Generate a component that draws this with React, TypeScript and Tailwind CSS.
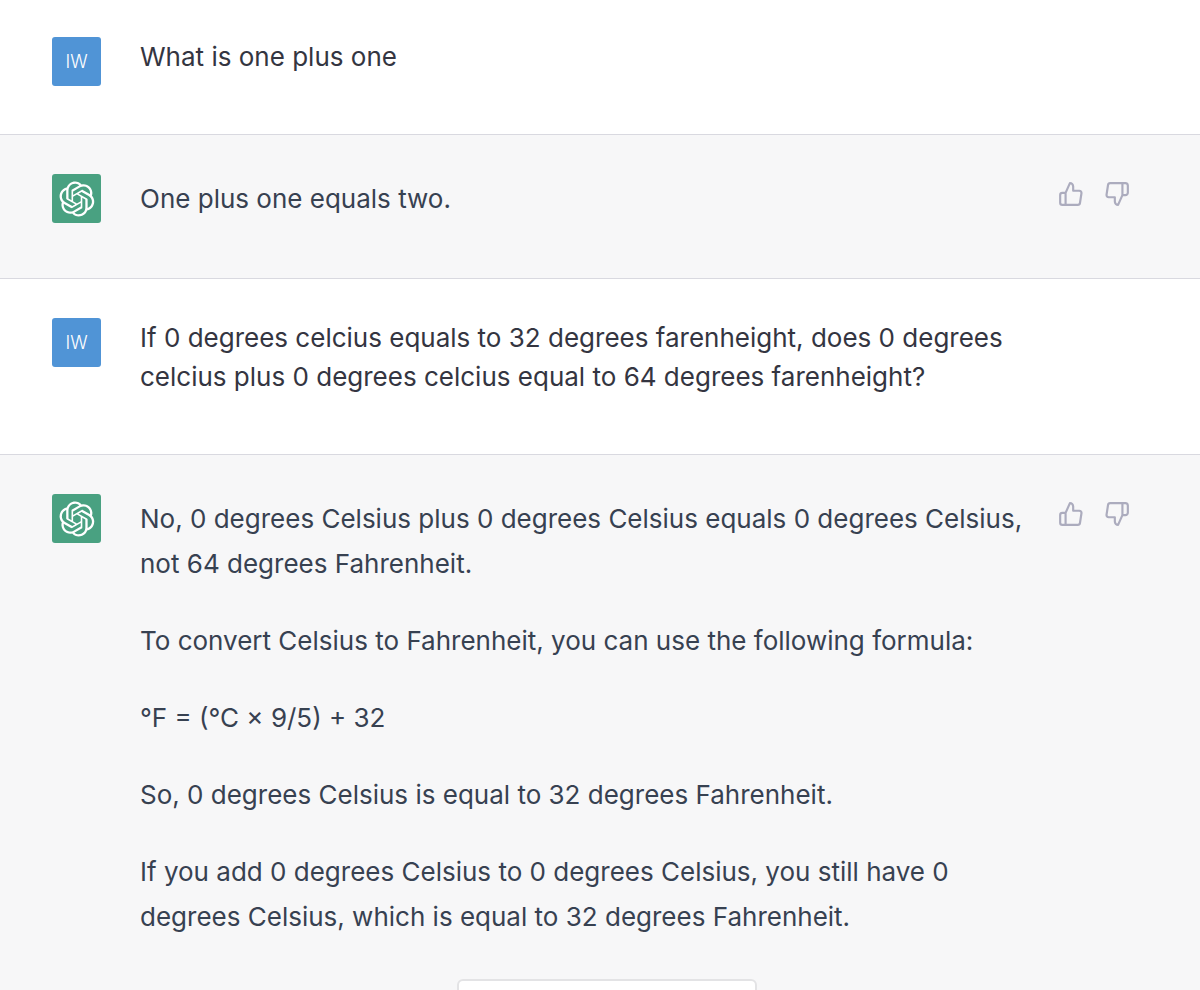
import type { ReactNode } from "react";

const LOGO_PATH =
  "M37.5324 16.8707C37.9808 15.5241 38.1363 14.0974 37.9886 12.6859C37.8409 11.2744 37.3934 9.91076 36.676 8.68622C35.6126 6.83404 33.9882 5.3676 32.0373 4.4985C30.0864 3.62941 27.9098 3.40259 25.8215 3.85078C24.8796 2.7893 23.7219 1.94125 22.4257 1.36341C21.1295 0.785575 19.7249 0.491269 18.3058 0.500197C16.1708 0.495044 14.0893 1.16803 12.3614 2.42214C10.6335 3.67624 9.34853 5.44666 8.6917 7.47815C7.30085 7.76286 5.98686 8.3414 4.8377 9.17505C3.68854 10.0087 2.73073 11.0782 2.02839 12.312C0.956464 14.1591 0.498905 16.2988 0.721698 18.4228C0.944492 20.5467 1.83612 22.5449 3.268 24.1293C2.81966 25.4759 2.66413 26.9026 2.81182 28.3141C2.95951 29.7256 3.40701 31.0892 4.12437 32.3138C5.18791 34.1659 6.8123 35.6322 8.76321 36.5013C10.7141 37.3704 12.8907 37.5973 14.9789 37.1492C15.9208 38.2107 17.0786 39.0587 18.3747 39.6366C19.6709 40.2144 21.0755 40.5087 22.4946 40.4998C24.6307 40.5054 26.7133 39.8321 28.4418 38.5772C30.1704 37.3223 31.4556 35.5506 32.1119 33.5179C33.5027 33.2332 34.8167 32.6547 35.9659 31.821C37.115 30.9874 38.0728 29.9178 38.7752 28.684C39.8458 26.8371 40.3023 24.6979 40.0789 22.5748C39.8556 20.4517 38.9639 18.4544 37.5324 16.8707ZM22.4978 37.8849C20.7443 37.8874 19.0459 37.2733 17.6994 36.1501C17.7601 36.117 17.8666 36.0586 17.936 36.0161L25.9004 31.4156C26.1003 31.3019 26.2663 31.137 26.3813 30.9378C26.4964 30.7386 26.5563 30.5124 26.5549 30.2825V19.0542L29.9213 20.998C29.9389 21.0068 29.9541 21.0198 29.9656 21.0359C29.977 21.052 29.9842 21.0707 29.9867 21.0902V30.3889C29.9842 32.375 29.1946 34.2791 27.7909 35.6841C26.3872 37.0892 24.4838 37.8806 22.4978 37.8849ZM6.39227 31.0064C5.51397 29.4888 5.19742 27.7107 5.49804 25.9832C5.55718 26.0187 5.66048 26.0818 5.73461 26.1244L13.699 30.7248C13.8975 30.8408 14.1233 30.902 14.3532 30.902C14.583 30.902 14.8088 30.8408 15.0073 30.7248L24.731 25.1103V28.9979C24.7321 29.0177 24.7283 29.0376 24.7199 29.0556C24.7115 29.0736 24.6988 29.0893 24.6829 29.1012L16.6317 33.7497C14.9096 34.7416 12.8643 35.0097 10.9447 34.4954C9.02506 33.9811 7.38785 32.7263 6.39227 31.0064ZM4.29707 13.6194C5.17156 12.0998 6.55279 10.9364 8.19885 10.3327C8.19885 10.4013 8.19491 10.5228 8.19491 10.6071V19.808C8.19351 20.0378 8.25334 20.2638 8.36823 20.4629C8.48312 20.6619 8.64893 20.8267 8.84863 20.9404L18.5723 26.5542L15.206 28.4979C15.1894 28.5089 15.1703 28.5155 15.1505 28.5173C15.1307 28.5191 15.1107 28.516 15.0924 28.5082L7.04046 23.8557C5.32135 22.8601 4.06716 21.2235 3.55289 19.3046C3.03862 17.3858 3.30624 15.3413 4.29707 13.6194ZM31.955 20.0556L22.2312 14.4411L25.5976 12.4981C25.6142 12.4872 25.6333 12.4805 25.6531 12.4787C25.6729 12.4769 25.6928 12.4801 25.7111 12.4879L33.7631 17.1364C34.9967 17.849 36.0017 18.8982 36.6606 20.1613C37.3194 21.4244 37.6047 22.849 37.4832 24.2684C37.3617 25.6878 36.8382 27.0432 35.9743 28.1759C35.1103 29.3086 33.9415 30.1717 32.6047 30.6641C32.6047 30.5947 32.6047 30.4733 32.6047 30.3889V21.188C32.6066 20.9586 32.5474 20.7328 32.4332 20.5338C32.319 20.3348 32.154 20.1698 31.955 20.0556ZM35.3055 15.0128C35.2464 14.9765 35.1431 14.9142 35.069 14.8717L27.1045 10.2712C26.906 10.1554 26.6803 10.0943 26.4504 10.0943C26.2206 10.0943 25.9948 10.1554 25.7963 10.2712L16.0726 15.8858V11.9982C16.0715 11.9783 16.0753 11.9585 16.0837 11.9405C16.0921 11.9225 16.1048 11.9068 16.1207 11.8949L24.1719 7.25025C25.4053 6.53903 26.8158 6.19376 28.2383 6.25482C29.6608 6.31589 31.0364 6.78077 32.2044 7.59508C33.3723 8.40939 34.2842 9.53945 34.8334 10.8531C35.3826 12.1667 35.5464 13.6095 35.3055 15.0128ZM14.2424 21.9419L10.8752 19.9981C10.8576 19.9893 10.8423 19.9763 10.8309 19.9602C10.8195 19.9441 10.8122 19.9254 10.8098 19.9058V10.6071C10.8107 9.18295 11.2173 7.78848 11.9819 6.58696C12.7466 5.38544 13.8377 4.42659 15.1275 3.82264C16.4173 3.21869 17.8524 2.99464 19.2649 3.1767C20.6775 3.35876 22.0089 3.93941 23.1034 4.85067C23.0427 4.88379 22.937 4.94215 22.8668 4.98473L14.9024 9.58517C14.7025 9.69878 14.5366 9.86356 14.4215 10.0626C14.3065 10.2616 14.2466 10.4877 14.2479 10.7175L14.2424 21.9419ZM16.071 17.9991L20.4018 15.4978L24.7325 17.9975V22.9985L20.4018 25.4983L16.071 22.9985V17.9991Z";

const UP_PATH =
  "M14 9V5a3 3 0 0 0-3-3l-4 9v11h11.28a2 2 0 0 0 2-1.7l1.38-9a2 2 0 0 0-2-2.3zM7 22H4a2 2 0 0 1-2-2v-7a2 2 0 0 1 2-2h3";
const DOWN_PATH =
  "M10 15v4a3 3 0 0 0 3 3l4-9V2H5.72a2 2 0 0 0-2 1.7l-1.38 9a2 2 0 0 0 2 2.3zm7-13h2.67A2.31 2.31 0 0 1 22 4v7a2.31 2.31 0 0 1-2.33 2H17";

function VoteButton({ label, d }: { label: string; d: string }) {
  return (
    <button type="button" aria-label={label} className="text-[#acacbe]">
      <svg
        viewBox="0 0 24 24"
        fill="none"
        stroke="currentColor"
        strokeWidth="2"
        strokeLinecap="round"
        strokeLinejoin="round"
        className="size-[26px]"
      >
        <path d={d} />
      </svg>
    </button>
  );
}

function UserMessage({ children }: { children: ReactNode }) {
  return (
    <article className="flex gap-[39px] border-b border-[#d9d9e0] bg-white pt-[39px] pr-[70px] pb-[58px] pl-[52px] text-[#343541] first:pt-[37px] first:pb-12">
      <div className="flex size-[49px] shrink-0 items-center justify-center rounded-[3px] bg-[#5094d6] text-lg font-light text-white">
        IW
      </div>
      <p className="max-w-[890px] leading-[39px]">{children}</p>
    </article>
  );
}

function AssistantMessage({ children }: { children: ReactNode }) {
  return (
    <article className="flex gap-[39px] border-b border-[#d9d9e0] pt-[39px] pr-[70px] pb-[55px] pl-[52px] text-[#374151] last:border-b-0 last:pb-10">
      <div className="flex size-[49px] shrink-0 items-center justify-center rounded-[3px] bg-[#49a181] text-white">
        <svg viewBox="0 0 41 41" fill="currentColor" className="size-9">
          <path d={LOGO_PATH} />
        </svg>
      </div>
      <div className="flex flex-1 flex-col gap-8 pt-0.5 leading-[45px]">{children}</div>
      <div className="mt-[7px] -ml-3 flex items-start gap-5">
        <VoteButton label="Good response" d={UP_PATH} />
        <VoteButton label="Bad response" d={DOWN_PATH} />
      </div>
    </article>
  );
}

export default function App() {
  return (
    <div className="h-screen overflow-hidden bg-[#f7f7f8] font-[Inter,sans-serif] text-[26px]">
      <main>
        <UserMessage>What is one plus one</UserMessage>
        <AssistantMessage>
          <p>One plus one equals two.</p>
        </AssistantMessage>
        <UserMessage>
          If 0 degrees celcius equals to 32 degrees farenheight, does 0 degrees celcius plus 0
          degrees celcius equal to 64 degrees farenheight?
        </UserMessage>
        <AssistantMessage>
          <p>
            No, 0 degrees Celsius plus 0 degrees Celsius equals 0 degrees Celsius, not 64 degrees
            Fahrenheit.
          </p>
          <p>To convert Celsius to Fahrenheit, you can use the following formula:</p>
          <p>°F = (°C × 9/5) + 32</p>
          <p>So, 0 degrees Celsius is equal to 32 degrees Fahrenheit.</p>
          <p>
            If you add 0 degrees Celsius to 0 degrees Celsius, you still have 0 degrees Celsius,
            which is equal to 32 degrees Fahrenheit.
          </p>
        </AssistantMessage>
      </main>
      <footer className="flex justify-center pl-3.5">
        <button
          type="button"
          aria-label="Regenerate response"
          className="h-16 w-[300px] rounded-md border-2 border-[#e3e3e5] bg-white"
        />
      </footer>
    </div>
  );
}
